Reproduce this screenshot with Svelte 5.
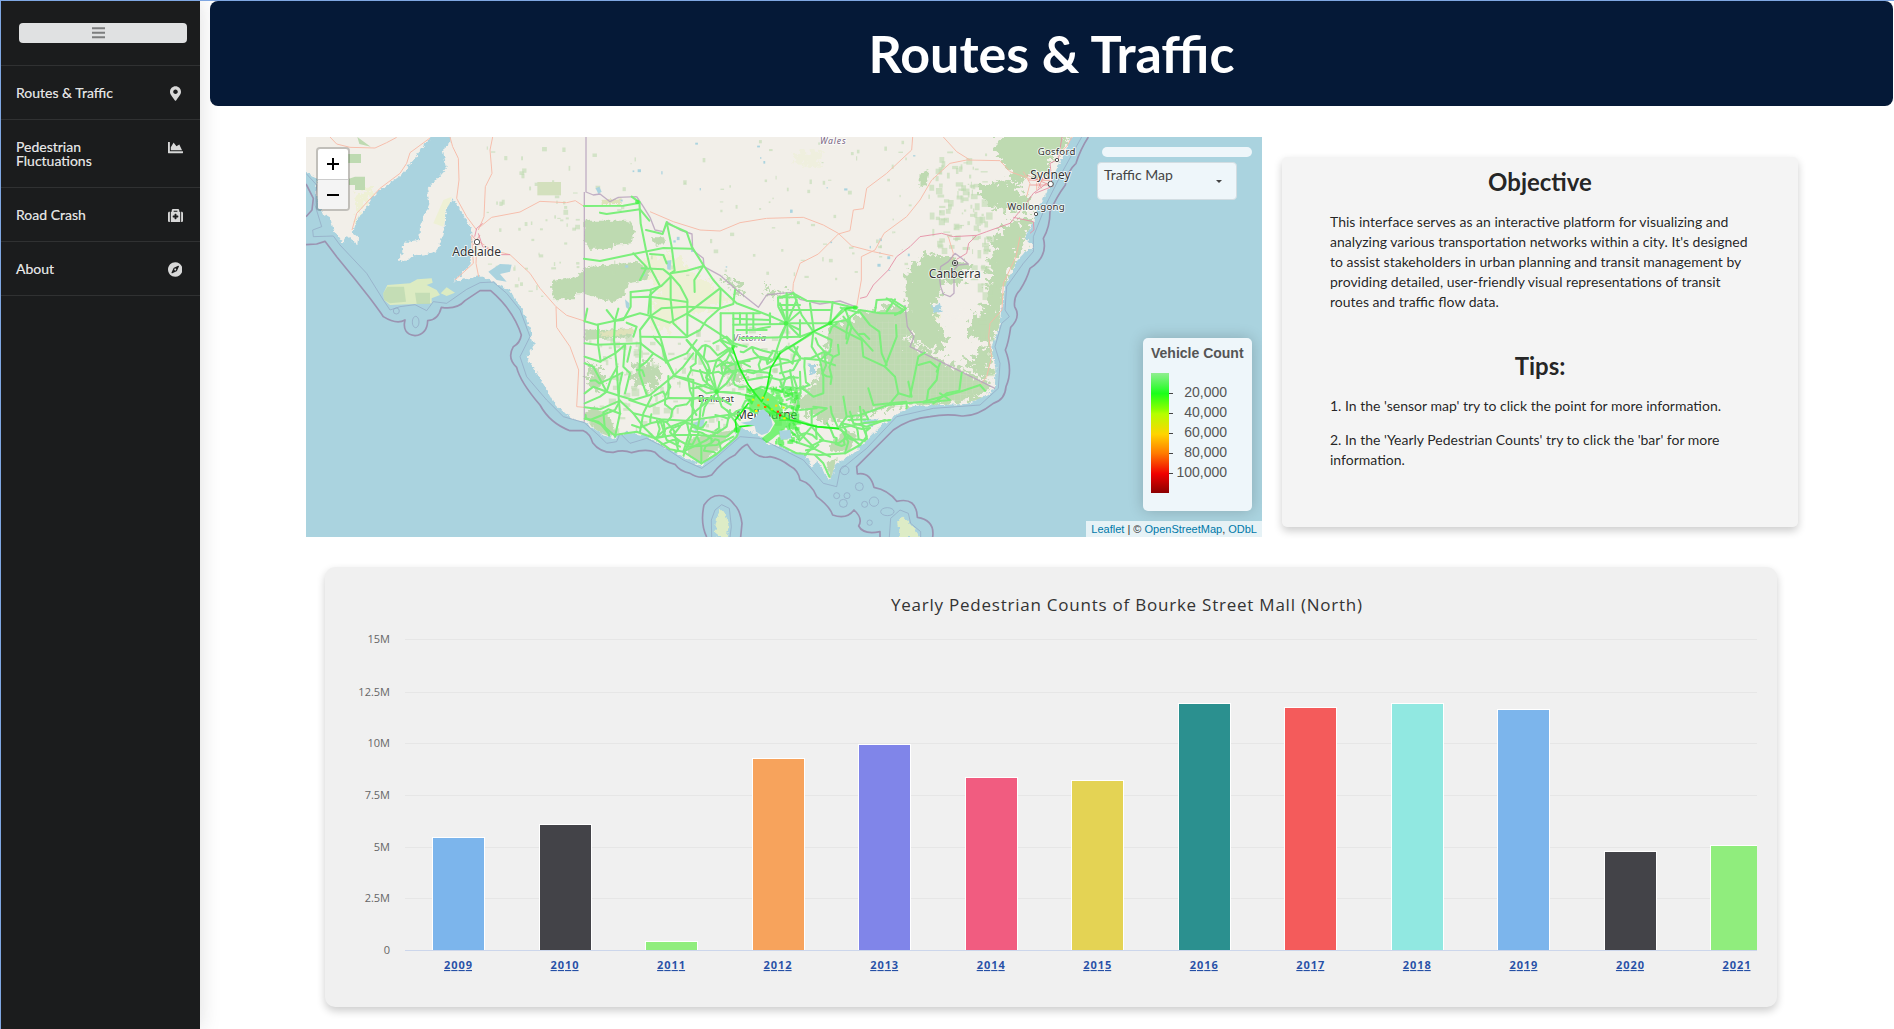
<script>
  const menu = [
    {
      label: 'Routes & Traffic', box: '0 0 384 512', w: 11,
      d: 'M172.268 501.67C26.97 291.031 0 269.413 0 192 0 85.961 85.961 0 192 0s192 85.961 192 192c0 77.413-26.97 99.031-172.268 309.67-9.535 13.774-29.93 13.773-39.464 0zM192 272c44.183 0 80-35.817 80-80s-35.817-80-80-80-80 35.817-80 80 35.817 80 80 80z'
    },
    {
      label: 'Pedestrian Fluctuations', box: '0 0 512 512', w: 15,
      d: 'M500 384c6.6 0 12 5.4 12 12v40c0 6.6-5.4 12-12 12H12c-6.6 0-12-5.4-12-12V76c0-6.6 5.4-12 12-12h40c6.6 0 12 5.4 12 12v308h436zM372.7 159.5L288 216l-85.3-113.7c-5.1-6.8-15.5-6.3-19.9 1L96 248v104h384l-89.9-187.8c-3.2-6.5-11.4-8.7-17.4-4.7z'
    },
    {
      label: 'Road Crash', box: '0 0 512 512', w: 15,
      d: 'M96 480h320V128h-32V80c0-26.51-21.49-48-48-48H176c-26.51 0-48 21.49-48 48v48H96v352zm96-384h128v32H192V96zm320 80v256c0 26.51-21.49 48-48 48h-16V128h16c26.51 0 48 21.49 48 48zM64 480H48c-26.51 0-48-21.49-48-48V176c0-26.51 21.49-48 48-48h16v352zm288-208v32c0 8.837-7.163 16-16 16h-48v48c0 8.837-7.163 16-16 16h-32c-8.837 0-16-7.163-16-16v-48h-48c-8.837 0-16-7.163-16-16v-32c0-8.837 7.163-16 16-16h48v-48c0-8.837 7.163-16 16-16h32c8.837 0 16 7.163 16 16v48h48c8.837 0 16 7.163 16 16z'
    },
    {
      label: 'About', box: '0 0 496 512', w: 14.5,
      d: 'M225.38 233.37c-12.5 12.5-12.5 32.76 0 45.25 12.49 12.5 32.76 12.5 45.25 0 12.5-12.5 12.5-32.76 0-45.25-12.5-12.49-32.76-12.49-45.25 0zM248 8C111.03 8 0 119.03 0 256s111.03 248 248 248 248-111.03 248-248S384.97 8 248 8zm126.14 148.05L308.17 300.4a31.938 31.938 0 0 1-15.77 15.77l-144.34 65.97c-16.65 7.61-33.81-9.55-26.2-26.2l65.98-144.35a31.938 31.938 0 0 1 15.77-15.77l144.34-65.97c16.65-7.6 33.8 9.55 26.19 26.2z'
    }
  ];

  const legend = ['20,000', '40,000', '60,000', '80,000', '100,000'];

  // Chart geometry, relative to the card's top-left corner
  const left = 80, right = 1432, base = 383;
  const grid = [
    ['15M', 72.5], ['12.5M', 125.5], ['10M', 176.5], ['7.5M', 228.5], ['5M', 280.5], ['2.5M', 331.5], ['0', 383.5]
  ];
  const bars = [
    ['2009', 271, '#7cb5ec'], ['2010', 258, '#434348'], ['2011', 375, '#90ed7d'], ['2012', 192, '#f7a35c'],
    ['2013', 178, '#8085e9'], ['2014', 211, '#f15c80'], ['2015', 214, '#e4d354'], ['2016', 137, '#2b908f'],
    ['2017', 141, '#f45b5b'], ['2018', 137, '#91e8e1'], ['2019', 143, '#7cb5ec'], ['2020', 285, '#434348'],
    ['2021', 279, '#90ed7d']
  ].map(([year, top, color], i) => ({ year, top, color, x: 133 + i * 106.54 }));

  const landPath =
    'M0 -10V112L18 125L50 145L48 200L60 225L66 250L92 265L100 298L128 340L140 318L172 346L174 322L158 308L172 268L196 236L226 190L300 138L350 78L372 42L395 21L400 -10ZM452 -10V21L450 42L428 60L440 112L408 150L382 178L388 222L360 290L358 330L318 336L305 350L308 370L290 392L322 392L340 376L384 372L414 362L434 292L436 240L460 205L478 232L514 300L512 402L488 428L460 455L540 438L592 462L630 482L668 540L692 600L702 650L680 682L722 748L768 828L820 868L853 875L900 908L940 924L980 905L1040 918L1100 955L1170 990L1205 1006L1250 968L1306 922L1316 890L1350 905L1384 918L1400 940L1440 950L1470 962L1520 976L1536 1014L1552 992L1590 1052L1606 1002L1655 975L1680 952L1750 882L1800 845L1840 828L2000 822L2050 800L2085 775L2086 710L2074 650L2098 590L2104 540L2118 460L2152 392L2176 364L2202 352L2174 322L2204 270L2210 240L2240 188L2264 130L2296 62L2315 21L2325 -10Z';

  // Traffic segments, western half of the state
  const west = [
    'M132 78L250 77L300 68L275 50', 'M180 98L200 102L300 88L328 122', 'M298 66L302 130L318 210L330 262L360 318L330 345L325 400',
    'M318 150L368 162L380 126L395 200L404 272L392 280', 'M382 130L440 156L455 200L490 255L520 300L542 325L590 370L650 392L700 412L740 430',
    'M132 236L180 243L280 222L370 204L455 206', 'M280 220L320 262L300 300', 'M305 265L370 268L392 286L420 318L442 360L442 470L400 430L392 360L392 286',
    'M392 280L440 272L490 258', 'M490 258L463 300L464 336', 'M330 222L370 225L380 250', 'M272 336L330 330L364 318L392 290',
    'M272 336V380L250 420L225 422L200 390', 'M274 352L330 350L442 366', 'M332 332V410', 'M225 422L235 386', 'M134 424L170 434L225 422L300 400L332 408',
    'M134 424L142 386', 'M332 408L364 385L442 380', 'M332 408L390 428L442 400L540 325', 'M332 408L300 450L302 490', 'M280 470L290 440L260 428',
    'M332 408L360 468L380 540L400 580', 'M302 470L440 472', 'M134 490L170 494L300 490', 'M302 490L340 520L380 545L404 588L540 635L600 640',
    'M442 470L480 450L500 420L540 385L542 326', 'M442 380L540 385L580 372L585 330', 'M442 402L500 436L560 475L580 500L560 540L530 560',
    'M542 400H660', 'M542 400V480L590 500', 'M580 400V490', 'M600 400V430', 'M620 402V460', 'M640 400V450L690 440', 'M580 416L690 420', 'M580 434L740 432',
    'M590 450H680', 'M600 475L780 470', 'M740 430L715 380L714 352H780', 'M740 430V340', 'M740 430L780 395', 'M740 430L780 450', 'M740 430L720 480L700 540',
    'M715 375H780', 'M690 400V430', 'M134 530L180 545L225 520L255 495', 'M134 550L160 560L200 635L240 648L280 660L330 645L400 588',
    'M134 670L180 650L200 635', 'M174 434V490L182 545', 'M225 422L222 480L230 560L235 640L240 700L225 770', 'M255 495L250 560L270 580L255 640',
    'M272 500L262 545', 'M302 490L298 580L320 645', 'M200 635L215 590L232 560', 'M134 716L175 725L222 765L290 755L345 775L390 808L430 815L484 850',
    'M134 682L180 688L240 662L225 690L150 720', 'M240 662L280 700L310 740L345 775', 'M268 660L330 680L385 654L460 655L540 655', 'M385 654V588',
    'M345 775L380 745L440 722L600 700', 'M345 775L400 765L470 765L560 770L590 745', 'M280 700L360 718L440 722', 'M404 588L460 600V650L455 740L430 815',
    'M440 722L460 700L530 640', 'M530 635L500 570L480 530L440 480', 'M530 635L518 580L530 540L580 500', 'M530 635L560 610L580 580L540 540L500 545L440 480',
    'M530 635L500 640L470 620', 'M530 635L545 680L600 720', 'M530 635L590 640L640 650', 'M530 635L490 600L480 570', 'M530 635L560 560L600 545L630 560',
    'M300 755L310 700L335 650', 'M360 718L380 780L420 800', 'M400 765L420 740', 'M470 765L484 800L484 850', 'M484 850L530 822L590 770L600 745',
    'M455 740L530 760L560 740L570 690', 'M440 800L530 795L580 770', 'M430 815L500 780L540 750', 'M560 690L600 745', 'M134 640L160 620L200 635',
    'M380 545L440 520L470 480', 'M400 588L430 560L460 520', 'M378 548L366 500L340 470', 'M340 520L320 545L300 560', 'M520 490L560 470L580 490L620 500',
    'M560 575L600 570L640 580L690 560', 'M580 520L560 500L540 480', 'M625 600L680 590L720 600L760 590', 'M700 540L740 500L780 530',
    'M690 560L730 550L780 540', 'M720 600L735 650L780 640', 'M760 590L770 620', 'M600 545L660 530L700 540'
  ];

  // Traffic segments, eastern half of the state
  const east = [
    'M0 112L40 100L80 122L150 126L230 145', 'M0 190H90L150 190L190 145L232 142', 'M22 110V235', 'M0 130L20 190L0 230', 'M20 190L50 120', 'M40 98L65 165L100 215',
    'M20 190L60 230L100 215L150 190', 'M60 180V230', 'M0 150H150', 'M90 130L102 215', 'M150 190L158 126', 'M150 190L200 180L240 150L300 160L360 160L378 145L335 118L290 120L285 155',
    'M150 190L195 215L245 240L250 290L315 320L350 230L348 195', 'M195 145L215 200L200 250', 'M235 150L270 195L298 215L305 280L320 315', 'M190 170L240 230L278 272',
    'M315 320L345 350L355 400L330 430L280 435L265 385', 'M320 115L370 150L345 165', 'M320 155L345 118', 'M0 275L40 255L100 218', 'M100 215L95 260L120 300L165 316',
    'M100 215L155 240L150 275L120 300', 'M40 255L60 295L40 330L0 340', 'M60 295L120 300L130 350L130 400L100 410L60 380', 'M60 335L62 400L20 420', 'M0 380L40 390L30 330',
    'M0 480L50 480L110 500L175 505L250 490L330 480', 'M20 500L60 540L95 500L95 450', 'M30 540L90 560L150 590', 'M0 555L50 580L120 585L195 580L240 555L210 530L175 505',
    'M40 490L60 520L100 560L75 585', 'M95 500L130 540L90 560', 'M175 505L155 460L152 440', 'M175 505L200 470L190 410', 'M200 470L240 465L325 435L380 430L430 425L540 395L600 375',
    'M240 440L245 490L260 530L240 555', 'M210 455L220 490L260 500L315 480', 'M205 480L265 478L250 450', 'M195 580L205 545L185 510', 'M105 585L130 610L148 650',
    'M100 440L140 445L100 470', 'M60 400L50 450L0 430', 'M355 400L390 410L405 340L415 290L435 278', 'M415 315L450 305L475 325L470 360L445 390L440 425', 'M480 310L470 335',
    'M545 338L538 392L500 400L460 430', 'M480 400L510 420L430 428', 'M600 375L615 392', 'M385 365L395 410', 'M380 445V425L330 430', 'M60 450L110 445', 'M120 540L175 550L205 530'
  ];

  // Small scattered towns, parks and lakes; a fixed seed keeps them stable
  let seed = 11;
  const rnd = () => (seed = (seed * 16807) % 2147483647) / 2147483647;
  const scatter = (n, x, y, w, h, r) =>
    Array.from({ length: n }, () => ({ x: x + rnd() * w, y: y + rnd() * h, w: 3 + rnd() * r, h: 3 + rnd() * r }));
  const specks = [
    ...scatter(60, 560, 40, 270, 460, 12), ...scatter(80, 870, 30, 1000, 420, 11), ...scatter(90, 1880, 60, 180, 300, 20),
    ...scatter(130, 860, 590, 620, 320, 20), ...scatter(40, 2010, 300, 60, 450, 24)
  ];
  const lakes = scatter(28, 870, 30, 1050, 420, 7);
  const metro = scatter(300, 1335, 770, 155, 165, 12);

  // Local roads: a jittered lattice whose neighbours are joined at random
  const lattice = (x, y, cols, rows, step, keep) => {
    const at = Array.from({ length: rows }, (_, r) =>
      Array.from({ length: cols }, (_, c) => [
        Math.round(x + (c + (rnd() - 0.5) * 0.9) * step),
        Math.round(y + (r + (rnd() - 0.5) * 0.9) * step)
      ])
    );
    const out = [];
    const join = (a, b) => {
      const mx = (a[0] + b[0]) / 2 + (rnd() - 0.5) * step * 0.5;
      const my = (a[1] + b[1]) / 2 + (rnd() - 0.5) * step * 0.5;
      out.push(`M${a[0]} ${a[1]}L${Math.round(mx)} ${Math.round(my)}L${b[0]} ${b[1]}`);
    };
    for (let r = 0; r < rows; r++)
      for (let c = 0; c < cols; c++) {
        if (c + 1 < cols && rnd() < keep) join(at[r][c], at[r][c + 1]);
        if (r + 1 < rows && rnd() < keep) join(at[r][c], at[r + 1][c]);
      }
    return out.join('');
  };
  const local = [
    lattice(1180, 660, 9, 6, 38, 0.62), lattice(870, 700, 8, 6, 48, 0.35), lattice(1060, 880, 7, 4, 32, 0.6),
    lattice(1470, 640, 4, 4, 42, 0.4), lattice(1460, 880, 8, 3, 34, 0.5), lattice(1600, 540, 4, 3, 36, 0.4)
  ].join('');

  const hot = [
    [1385, 800, '#fd0'], [1372, 823, '#fa0'], [1392, 828, '#f60'], [1425, 824, '#fd0'], [1430, 842, '#f30'], [1437, 853, '#f00'],
    [1400, 806, '#fc0'], [1365, 840, '#fe0'], [1450, 862, '#fe0'], [1412, 835, '#af0'], [1356, 806, '#df0'], [1447, 830, '#cf0']
  ];
</script>

<div class="page">
  <aside class="sidebar">
    <div class="toggle-row">
      <button class="toggle" aria-label="Toggle menu">
        <svg width="13" height="12" viewBox="0 0 13 12"><path d="M0 1.3H13M0 5.8H13M0 10.3H13" /></svg>
      </button>
    </div>
    {#each menu as item}
      <a class="item" href="#top">
        <span class="label">{item.label}</span>
        <span class="icon"><svg viewBox={item.box} width={item.w} height="15"><path d={item.d} /></svg></span>
      </a>
    {/each}
  </aside>

  <main>
    <header><h1>Routes &amp; Traffic</h1></header>

    <section class="top">
      <div class="map">
        <svg class="canvas" viewBox="18 21 2868 1200" preserveAspectRatio="none">
          <defs>
            <filter id="rough" x="-5%" y="-5%" width="110%" height="110%">
              <feTurbulence type="fractalNoise" baseFrequency="0.09" numOctaves="3" seed="4" />
              <feDisplacementMap in="SourceGraphic" scale="16" xChannelSelector="R" yChannelSelector="G" />
            </filter>
            <filter id="ragged" x="-5%" y="-5%" width="110%" height="110%">
              <feTurbulence type="fractalNoise" baseFrequency="0.06" numOctaves="4" seed="8" />
              <feDisplacementMap in="SourceGraphic" scale="70" xChannelSelector="R" yChannelSelector="G" />
            </filter>
            <clipPath id="land"><path d={landPath} /></clipPath>
            <pattern id="mesh" width="18" height="18" patternUnits="userSpaceOnUse">
              <path d="M0 0H18M0 0V18" stroke="#cbdfc0" stroke-width="2" />
            </pattern>
          </defs>

          <rect x="18" y="21" width="2868" height="1200" fill="#aad3df" />
          <path d={landPath} fill="#f2efe9" filter="url(#rough)" />

          <g clip-path="url(#land)">
            <g fill="#eef0d5">
              <path d="M1010 400L1110 360L1170 420L1250 470L1290 520L1160 560L1080 610L1040 560L1080 480Z" filter="url(#ragged)" />
              <path d="M170 190L230 170L190 240L165 300Z" filter="url(#ragged)" />
              <path d="M430 210L455 200L430 290L400 280Z" />
              <path d="M1860 590L1910 550L1925 600L1880 640Z" filter="url(#ragged)" />
              <path d="M1480 70L1570 60L1560 110L1490 110Z" filter="url(#ragged)" opacity=".5" />
            </g>
            <g fill="#bedab1">
              <path d="M145 72H183V99H145ZM147 146L165 140H195V180H165V165H147ZM172 21L212 50L178 42Z" />
              <path d="M853 272H985L1005 300L995 340L940 345L935 357L870 356L853 340Z" filter="url(#rough)" />
              <path d="M756 454L830 440L860 412L1010 395L1050 420L1040 450L985 460L970 500L940 518L850 490H825V508H758Z" filter="url(#rough)" />
              <path d="M853 598L905 600L1000 594L990 622L853 630ZM1052 322H1095L1098 336L1070 348Z" filter="url(#rough)" />
              <path d="M853 850L880 830L930 860L950 915L920 920L880 895ZM1160 930L1240 910L1300 900L1260 950L1205 1000L1165 975Z" filter="url(#rough)" />
              <path d="M1000 700L1070 700L1090 740L1050 780L1000 750ZM860 690L910 720L905 775L870 770ZM1270 700L1310 690L1340 750L1290 760ZM1260 436L1320 460L1330 500L1290 470ZM1395 450L1410 480L1470 490L1400 500Z" filter="url(#ragged)" />
              <path d="M1590 590L1640 570L1700 545L1780 525L1820 540L1826 640L1860 655L2080 770L2040 800L1980 820L1820 828L1740 840L1660 860L1590 880L1510 850L1480 800L1540 770L1570 680Z" filter="url(#ragged)" />
              <path d="M1820 420L1880 370L1960 380L2010 400L1990 460L1930 450L1900 560L1940 610L1930 660L1860 650L1820 600Z" filter="url(#ragged)" />
              <path d="M2080 320L2130 275L2200 260L2190 310L2150 380L2120 450L2100 560L2070 660L2080 740L2060 750L1990 690L2020 620L1990 610L2060 520L2070 400Z" filter="url(#ragged)" />
              <path d="M2090 0H2310L2290 60L2250 90L2240 130L2190 140L2150 170L2130 130L2095 80Z" filter="url(#ragged)" />
              <path d="M2040 165L2130 150L2180 200L2200 240L2120 250L2040 210Z" filter="url(#ragged)" />
              <path d="M1860 130L1885 120L1880 165L1858 170ZM1580 1000L1610 985L1600 1045L1588 1045ZM1590 940L1640 900L1670 915L1650 960L1590 965Z" filter="url(#rough)" />
              {#each specks as s}<rect x={s.x} y={s.y} width={s.w} height={s.h} opacity="0.6" />{/each}
            </g>
            <path d="M1600 600L1830 560V640L2060 760L1980 815L1600 850L1520 800Z" fill="url(#mesh)" />
            <path d="M1920 590L1950 560L2010 590L2000 620L2060 640L2010 690L1950 660ZM1940 455L1985 460L2000 520L1970 570L1930 540Z" fill="#f2efe9" filter="url(#ragged)" />
          </g>
          <path d="M712 156H783V196H712Z" fill="#d3e0bd" />
          <path d="M905 210L965 205V222H905ZM900 606L1000 595V612L905 622Z" fill="#dfe2ba" filter="url(#rough)" />
          <path d="M250 490L262 465L330 460L352 448L395 445L398 458L380 465L410 480L420 495L395 505V520L270 525L252 510ZM422 490L440 472L465 488L440 498Z" fill="#dcebc2" />
          <path d="M250 490L262 470L312 470L318 515L270 520L252 510ZM345 488H390V522H350Z" fill="#bedab1" opacity=".8" />
          <path d="M1252 1160L1262 1135L1276 1150L1286 1190L1280 1221H1250L1246 1190ZM1794 1170L1810 1160L1836 1185L1860 1221H1800Z" fill="#ddecc6" filter="url(#rough)" />

          <g fill="#aad3df">
            <path d="M887 175L898 170L905 185L895 192ZM1100 392L1114 390L1112 420L1102 418ZM975 508L988 520L988 540L978 532ZM1180 880L1215 865L1210 890L1185 905ZM565 425L600 402L635 404L630 425L600 432L620 455L590 450Z" />
            <path d="M1526 700L1545 705L1545 730L1530 735ZM1690 870L1740 868L1715 888L1690 884ZM1895 530L1920 520L1925 545L1905 550Z" filter="url(#rough)" />
            {#each lakes as l}<rect x={l.x} y={l.y} width={l.w} height={l.h} />{/each}
          </g>

          <g class="road">
            <path d="M90 21L110 42L150 52L225 54L260 38L290 22M390 24L330 68L320 100L300 130L240 175L170 250L156 300" />
            <path d="M450 21L458 50L475 85L477 150L470 205L500 260L530 300M578 21L570 60L576 130L556 170L552 260L535 300" />
            <path d="M535 295L575 262L660 246L720 214L800 218L826 212L853 230M530 330L575 360L630 374L690 430L720 475L768 530L800 556L853 573M768 530L770 592L810 650L836 720L830 830L853 832M515 320L520 400L465 450M530 350L528 400L536 440" />
            <path d="M1050 245L1120 275L1200 300L1260 303L1320 278L1400 265L1510 262L1570 285L1615 310L1655 348L1720 365L1780 378M1478 490L1480 460L1500 400L1555 372L1615 312L1650 302L1660 240L1690 236L1700 175L1760 130L1835 60L1838 21M1670 530L1684 450L1684 380L1725 360L1752 310L1820 260L1860 210L1895 150L1950 100L2000 90L2100 92M1930 21L1970 65L2010 90M2100 92L2130 125L2200 150L2250 150" />
            <path d="M2160 320L2148 380L2110 460L2106 540L2070 580L2066 620L2075 680L2060 740L2040 765" />
            <path d="M2316 21L2300 50L2280 65M2170 125L2190 160L2180 200M2210 130V180M1945 320L1960 370L1955 390" />
          </g>
          <g class="road major">
            <path d="M1680 505L1700 500L1720 465L1765 420L1790 380L1830 350L1860 320L1925 310L1960 320L2030 316L2060 305L2130 280L2150 255L2175 225L2200 190L2240 160M2030 316L2006 340L2000 370L1970 388M2140 262L2200 275L2202 300L2190 310M2205 190L2250 172L2255 148L2250 100L2275 88L2286 21" />
            <path d="M524 320L530 295L548 280M535 310L548 350L605 374H630" />
          </g>
          <path class="road dense" d="M2185 150H2250M2190 165H2255M2205 140L2225 175M2230 140L2215 175M2180 135L2260 170M515 315L540 345M540 315L520 345" />

          <g class="admin">
            <path d="M858 21V186L880 195L900 192L930 215L955 202L1010 200M853 186V875M1010 200L1030 230L1050 262L1065 300L1090 305L1102 276L1140 300L1176 312L1178 360L1210 385L1212 410L1260 436L1310 480L1375 532L1400 495L1440 490L1478 487L1500 508L1560 522L1620 513L1672 532" />
            <path d="M1815 525L1822 590L1842 620L1830 650L2085 775M1922 410L1945 395L1965 370L1985 385L2005 402L1975 405L1962 420L1962 490L1950 500L1930 492L1922 470L1918 440Z" />
          </g>

          <g class="coast inner">
            <path d="M18 130L50 165L45 225L65 290L38 300L40 320L100 318L120 345L200 430L250 510L270 540L300 530L345 524L380 542L400 515L440 520L500 478L540 458L580 456L620 490L660 540L690 620L660 680L680 740L740 810L790 860L853 878L900 920L920 940L950 935L960 910L990 940L1040 925L1090 950L1150 990L1205 1015L1240 990L1320 920L1380 925L1440 955L1510 990L1570 1060L1610 1070L1620 1020L1700 955L1790 860L1900 835L2040 825L2095 775L2100 700L2085 650L2105 580L2128 560L2115 540L2120 470L2170 400L2200 365L2200 320L2240 220L2290 120L2345 21" />
            <circle cx="289" cy="543" r="9" /><ellipse cx="347" cy="576" rx="10" ry="17" />
            <circle cx="1634" cy="1021" r="13" /><circle cx="1678" cy="1070" r="12" /><circle cx="1610" cy="1097" r="9" /><circle cx="1641" cy="1097" r="9" />
            <circle cx="1630" cy="1120" r="12" /><circle cx="1694" cy="1123" r="9" /><circle cx="1722" cy="1115" r="14" /><circle cx="1709" cy="1178" r="8" />
            <ellipse cx="1762" cy="1145" rx="20" ry="12" />
            <path d="M1235 1221L1234 1170L1245 1140L1265 1124L1288 1135L1294 1190L1290 1221M1768 1221L1772 1165L1800 1140L1825 1150L1832 1180L1862 1205V1221" />
          </g>
          <g class="coast">
            <path d="M18 162L40 205L36 240L18 260M18 344L50 342L75 334L110 380Q160 440 210 505Q240 545 250 560Q290 585 315 570Q305 612 345 617Q382 612 383 572Q415 570 424 532Q470 540 495 512L540 482H572Q640 540 664 615Q660 640 640 650Q620 685 650 712Q660 755 720 825Q750 880 810 902H850Q870 910 878 938Q900 968 940 967Q970 958 995 968Q1040 955 1065 967Q1090 995 1125 1003Q1140 1025 1170 1030Q1200 1050 1235 1035Q1270 990 1305 975Q1330 945 1342 943Q1370 990 1410 980Q1440 985 1470 1008Q1495 1020 1500 1050Q1535 1060 1550 1100Q1590 1130 1598 1155Q1640 1170 1662 1140Q1690 1165 1676 1188Q1690 1215 1740 1205V1221" />
            <path d="M1220 1221Q1200 1180 1212 1125Q1235 1090 1270 1098Q1290 1105 1304 1125Q1320 1140 1326 1180L1322 1221M2365 21Q2340 60 2328 100Q2300 125 2296 165Q2270 200 2250 245Q2250 290 2230 325Q2245 380 2190 415Q2180 450 2160 480Q2140 500 2144 530Q2164 560 2132 592Q2125 640 2116 660Q2140 720 2118 770Q2115 810 2080 820Q2030 860 1985 858Q1940 850 1890 860Q1830 865 1780 900L1670 1010L1672 1032Q1710 1025 1722 1072Q1765 1080 1790 1114Q1850 1100 1852 1162Q1905 1170 1898 1221" />
          </g>

          <g class="names">
            <text x="1298" y="634" font-size="28" font-style="italic" fill="#76627e" textLength="100">Victoria</text>
            <text x="1194" y="816" font-size="29" textLength="108">Ballarat</text>
            <text x="1308" y="868" font-size="36" textLength="184">Melbourne</text>
          </g>

          <g class="traffic">
            <path d={local} clip-path="url(#land)" />
            <g transform="translate(720 150)">{#each west as d}<path {d} />{/each}</g>
            <g transform="translate(1440 390)">{#each east as d}<path {d} />{/each}</g>
          </g>
          <g class="traffic busy">
            <path d="M1298 655L1318 712L1345 765L1385 815L1400 780L1412 715L1440 670" />
            <path d="M1390 820L1430 850L1470 870L1550 890L1615 896M1310 905L1306 870L1345 820M1320 890L1365 885" />
          </g>
          <path class="traffic busy" opacity=".55" d="M1440 670L1480 645L1540 605L1590 580L1640 535L1665 532" />
          <g fill="#30f530" opacity="0.62">
            {#each metro as m}
              {#if !(m.x < 1425 && m.y > 845)}<rect x={m.x} y={m.y} width={m.w} height={m.h} />{/if}
            {/each}
            <path d="M1345 800L1385 775L1425 800L1450 850L1460 890L1420 925L1400 940L1385 925L1410 905L1425 880L1400 842L1375 840L1350 850Z" />
            <circle cx="1458" cy="580" r="7" /><circle cx="1590" cy="580" r="7" /><circle cx="1310" cy="900" r="9" /><circle cx="1665" cy="533" r="7" /><circle cx="1250" cy="785" r="7" /><circle cx="1300" cy="650" r="6" /><circle cx="1012" cy="216" r="7" />
          </g>
          <path fill="#aad3df" d="M1322 878L1350 874L1370 858L1378 842L1390 838L1404 850L1414 868L1418 885L1404 908L1385 915L1368 905L1364 888L1340 884ZM1438 902L1470 900L1474 925L1442 930Z" />
          {#each hot as [x, y, c]}<rect {x} {y} width="7" height="6" fill={c} />{/each}

          <g class="names">
            <text x="457" y="379" font-size="36" textLength="146">Adelaide</text>
            <text x="1886" y="444" font-size="36" textLength="156">Canberra</text>
            <text x="2191" y="147" font-size="36" textLength="121">Sydney</text>
            <text x="2213" y="76" font-size="29" textLength="113">Gosford</text>
            <text x="2122" y="241" font-size="29" textLength="172">Wollongong</text>
            <text x="1560" y="42" font-size="26" font-style="italic" fill="#76627e" textLength="77">Wales</text>
          </g>
          <g fill="#fff" stroke="#555" stroke-width="3">
            <circle cx="531" cy="336" r="8" /><circle cx="2252" cy="162" r="8" /><circle cx="2271" cy="90" r="5" /><circle cx="2208" cy="252" r="5" />
            <circle cx="1965" cy="399" r="8" /><circle cx="1965" cy="399" r="3" fill="#333" />
          </g>
        </svg>

        <div class="zoom"><span><i></i><i class="v"></i></span><span class="out"><i></i></span></div>
        <div class="pill"></div>
        <div class="select"><span>Traffic Map</span><i></i></div>
        <div class="legend">
          <strong>Vehicle Count</strong>
          <div class="scale">
            <div class="ramp"></div>
            <ul>{#each legend as l}<li><i></i>{l}</li>{/each}</ul>
          </div>
        </div>
        <div class="credit"><a href="#leaflet">Leaflet</a> | © <a href="#osm">OpenStreetMap</a>, <a href="#odbl">ODbL</a></div>
      </div>

      <article class="info">
        <h2>Objective</h2>
        <p>This interface serves as an interactive platform for visualizing and analyzing various transportation networks within a city. It's designed to assist stakeholders in urban planning and transit management by providing detailed, user-friendly visual representations of transit routes and traffic flow data.</p>
        <h2 class="tips">Tips:</h2>
        <p>1. In the 'sensor map' try to click the point for more information.</p>
        <p>2. In the 'Yearly Pedestrian Counts' try to click the 'bar' for more information.</p>
      </article>
    </section>

    <section class="chart">
      <svg width="1452" height="440" viewBox="0 0 1452 440">
        <defs><clipPath id="plot"><rect x={left} y="60" width={right - left} height={base - 60} /></clipPath></defs>
        <text class="title" x="566" y="44" textLength="471">Yearly Pedestrian Counts of Bourke Street Mall (North)</text>
        {#each grid as [label, y]}
          <path d="M{left} {y}H{right}" stroke="#e6e6e6" />
          <text class="tick" x="65" y={y + 3.5}>{label}</text>
        {/each}
        <g clip-path="url(#plot)">
          {#each bars as b}
            <rect x={Math.round(b.x - 26) + 0.5} y={b.top - 0.5} width="52" height={base - b.top + 1} fill={b.color} stroke="#fff" />
          {/each}
        </g>
        <path d="M{left} 383.5H{right}" stroke="#ccd6eb" />
        {#each bars as b}
          <text class="year" x={b.x - 14} y="402" textLength="28">{b.year}</text>
        {/each}
      </svg>
    </section>
  </main>
</div>

<style>
  :global(body) { background: #fff; overflow: hidden; }
  * { box-sizing: border-box; }
  .page {
    display: flex; height: 1029px; width: 1894px; overflow: hidden;
    border-top: 1px solid #7fa7e3; border-left: 1px solid #7fa7e3;
    font-family: Lato, 'Helvetica Neue', Arial, sans-serif; color: rgba(0, 0, 0, .87);
  }
  .sidebar { width: 199px; flex: none; background: #1b1c1d; box-shadow: 0 0 20px rgba(34, 36, 38, .15); }
  .toggle-row { height: 65px; padding: 22px 13px 0 18px; border-bottom: 1px solid #303132; }
  .toggle {
    display: flex; align-items: center; justify-content: center; width: 168px; height: 20px; padding: 0 9px 0 0;
    border: 0; border-radius: 4px; background: #e0e1e2;
  }
  .toggle path { stroke: #7c7d7e; stroke-width: 1.9; }
  .item {
    display: flex; justify-content: space-between; padding: 20px 17px 19px 15px; border-bottom: 1px solid #303132;
    color: rgba(255, 255, 255, .9); font-size: 14px; line-height: 14px; text-decoration: none;
    -webkit-text-stroke: .2px rgba(255, 255, 255, .9); font-kerning: normal;
  }
  .item .label { width: 110px; }
  .icon { display: flex; width: 16px; height: 14px; justify-content: center; }
  .icon svg { fill: #d8d8d8; }

  main { flex: 1; padding-left: 10px; }
  header {
    height: 105px; width: 1683px; border-radius: 8px; background: #051937;
    display: flex; align-items: center; justify-content: center; padding-bottom: 2px;
  }
  h1 { margin: 0; color: #fff; font-size: 52px; line-height: 60px; font-weight: 700; }

  .top { display: flex; gap: 20px; padding: 31px 0 0 97px; }
  .map { position: relative; width: 956px; height: 400px; margin-left: -1px; overflow: hidden; background: #aad3df; }
  .canvas { display: block; width: 956px; height: 400px; }
  .road { fill: none; stroke: #f7b9a6; stroke-width: 3; opacity: .9; }
  .major { stroke: #e58fa5; }
  .dense { stroke: #ee8f8f; stroke-width: 2.5; }
  .admin { fill: none; stroke: #b9a3bd; stroke-width: 4; opacity: .85; stroke-linejoin: round; }
  .coast { fill: none; stroke: #9b93b1; stroke-width: 5; stroke-linejoin: round; }
  .inner { stroke: #93a9c4; stroke-width: 2.2; }
  .traffic { fill: none; stroke: #7cef7c; stroke-width: 6.2; stroke-linejoin: round; stroke-linecap: round; }
  .busy { stroke: #1df51d; stroke-width: 5; }
  .names { font-family: 'Noto Sans', sans-serif; fill: #333; stroke: #fff; stroke-width: 5; stroke-opacity: .85; paint-order: stroke; }

  .zoom {
    position: absolute; left: 10px; top: 10px; width: 34px; height: 64px; background: #fff; background-clip: padding-box;
    border: 2px solid rgba(0, 0, 0, .2); border-radius: 4px; overflow: hidden;
  }
  .zoom span { position: relative; display: flex; height: 31px; align-items: center; justify-content: center; border-bottom: 1px solid #ccc; }
  .zoom .out { background: #f4f4f4; height: 30px; border: 0; }
  .zoom i { width: 12px; height: 2px; background: #000; }
  .zoom .v { position: absolute; width: 2px; height: 12px; }
  .pill { position: absolute; left: 796px; top: 10px; width: 150px; height: 10px; border-radius: 5px; background: #eef6fa; }
  .select {
    position: absolute; left: 791px; top: 25px; width: 140px; height: 38px; padding: 3px 14px 0 6px; display: flex; justify-content: space-between;
    border: 1px solid #d2dde2; border-radius: 4px; background: #eef6fa; font-size: 14px; line-height: 18px; color: #444;
  }
  .select i { margin-top: 14px; width: 0; height: 0; border: 3.5px solid transparent; border-top-color: #444; }
  .legend {
    position: absolute; left: 837px; top: 201px; width: 109px; height: 173px; padding: 6px 8px; border-radius: 5px;
    background: #eef6fa; box-shadow: 0 0 15px rgba(0, 0, 0, .2); color: #555; font: 14px/18px 'Liberation Sans', Arial, sans-serif;
  }
  .legend strong { display: block; white-space: nowrap; font-size: 14px; }
  .scale { display: flex; margin-top: 11px; }
  .ramp { width: 18px; height: 120px; background: linear-gradient(#90ee90, #1aff1a 17%, #8f0 30%, #b4ff00 34%, #ffd400 51%, #ff7a00 67%, #f00000 84%, #8b0000); }
  ul { list-style: none; margin: 10px 0 0; padding: 0; }
  li { position: relative; height: 20px; line-height: 19px; width: 58px; text-align: right; }
  li i { position: absolute; left: 0; top: 10px; width: 4px; height: 1px; background: #444; }
  .credit {
    position: absolute; right: 0; bottom: 0; height: 16px; padding: 0 5px; background: rgba(255, 255, 255, .7);
    font: 11px/16px 'Liberation Sans', Arial, sans-serif; color: #333; white-space: nowrap;
  }
  .credit a { color: #0078a8; text-decoration: none; }

  .info {
    width: 516px; height: 370px; margin-top: 20px; padding: 9px 48px; border-radius: 5px; background: #f4f4f4;
    box-shadow: 0 4px 8px rgba(0, 0, 0, .2);
  }
  h2 { margin: 0 0 14px; text-align: center; font-size: 24px; line-height: 32px; font-weight: 700; }
  p { margin: 0 0 14px; font-size: 14px; line-height: 20px; }
  .tips { margin-top: 38px; }

  .chart {
    width: 1452px; height: 440px; margin: 30px 0 0 115px; border-radius: 10px; background: #f0f0f0;
    box-shadow: 0 4px 8px rgba(0, 0, 0, .2);
  }
  .chart svg { display: block; }
  .chart text { font-family: 'Open Sans', 'Noto Sans', sans-serif; }
  .title { font-size: 17px; fill: #333; }
  .tick { font-size: 11px; fill: #666; text-anchor: end; }
  .year { font-size: 11px; font-weight: 700; fill: #003399; fill-opacity: .85; text-decoration: underline; }
</style>
